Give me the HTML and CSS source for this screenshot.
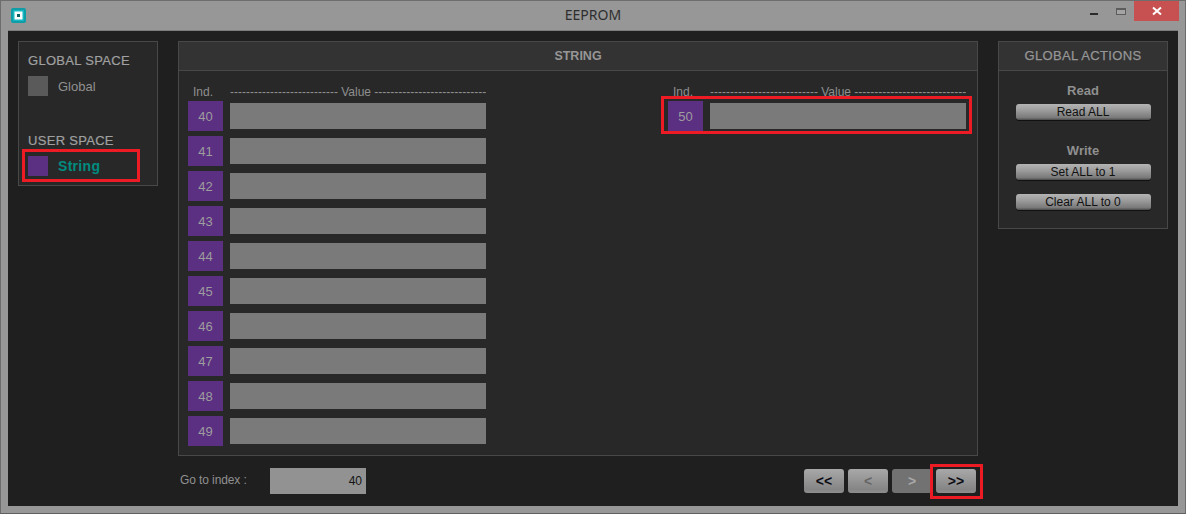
FILE: index.html
```html
<!DOCTYPE html>
<html lang="en">
<head>
<meta charset="utf-8">
<title>EEPROM</title>
<link rel="stylesheet" href="styles.css">
</head>
<body>
<div class="window">
  <header class="titlebar">
    <svg class="app-icon" width="15" height="15" viewBox="0 0 15 15" aria-hidden="true">
      <rect x="0" y="0" width="15" height="15" rx="2" fill="#0f9ea8"/>
      <rect x="2" y="2" width="11" height="11" fill="#17b6c0"/>
      <rect x="3.5" y="3.5" width="8" height="8" fill="#fff"/>
      <rect x="6" y="6" width="3" height="3" fill="#0d5f66"/>
    </svg>
    <div class="title">EEPROM</div>
    <div class="win-controls">
      <span class="win-min"></span>
      <span class="win-max"></span>
      <span class="win-close">
        <svg width="10" height="10" viewBox="0 0 10 10" aria-hidden="true"><path d="M1 1.5 L9 8.5 M9 1.5 L1 8.5" stroke="#fff" stroke-width="2" fill="none"/></svg>
      </span>
    </div>
  </header>

  <div class="client">
    <aside class="panel space-panel">
      <h2 class="space-title">GLOBAL SPACE</h2>
      <div class="space-item"><span class="swatch swatch-gray"></span><span class="space-label">Global</span></div>
      <h2 class="space-title user-title">USER SPACE</h2>
      <div class="space-item marked-left"><span class="swatch swatch-purple"></span><span class="space-label active">String</span></div>
    </aside>

    <main class="center">
      <section class="panel string-panel">
        <h2 class="panel-head">STRING</h2>
        <div class="columns">
          <div class="column">
            <div class="col-head"><span class="ind-head">Ind.</span><span class="val-head">--------------------------- Value ----------------------------</span></div>
            <div class="row"><span class="ind">40</span><span class="val"></span></div>
            <div class="row"><span class="ind">41</span><span class="val"></span></div>
            <div class="row"><span class="ind">42</span><span class="val"></span></div>
            <div class="row"><span class="ind">43</span><span class="val"></span></div>
            <div class="row"><span class="ind">44</span><span class="val"></span></div>
            <div class="row"><span class="ind">45</span><span class="val"></span></div>
            <div class="row"><span class="ind">46</span><span class="val"></span></div>
            <div class="row"><span class="ind">47</span><span class="val"></span></div>
            <div class="row"><span class="ind">48</span><span class="val"></span></div>
            <div class="row"><span class="ind">49</span><span class="val"></span></div>
          </div>
          <div class="column">
            <div class="col-head"><span class="ind-head">Ind.</span><span class="val-head">--------------------------- Value ----------------------------</span></div>
            <div class="row marked-row"><span class="ind">50</span><span class="val"></span></div>
          </div>
        </div>
      </section>
      <div class="footer">
        <label class="goto-label">Go to index :</label>
        <div class="goto-input">40</div>
        <nav class="pager">
          <button class="page-btn strong">&lt;&lt;</button>
          <button class="page-btn dim">&lt;</button>
          <button class="page-btn disabled">&gt;</button>
          <button class="page-btn strong marked-next">&gt;&gt;</button>
        </nav>
      </div>
    </main>

    <aside class="panel actions-panel">
      <h2 class="panel-head actions-head">GLOBAL ACTIONS</h2>
      <div class="actions">
        <div class="action-title">Read</div>
        <button class="action-btn">Read ALL</button>
        <div class="action-title write-title">Write</div>
        <button class="action-btn">Set ALL to 1</button>
        <button class="action-btn second">Clear ALL to 0</button>
      </div>
    </aside>
  </div>
</div>
</body>
</html>
```

FILE: styles.css
```css
*, *::after { box-sizing: border-box; }

html, body {
  margin: 0;
  height: 100%;
  overflow: hidden;
}

body {
  font-family: "Liberation Sans", Arial, sans-serif;
  font-size: 12px;
  background: #979797;
}

.window {
  width: 1186px;
  height: 514px;
  display: flex;
  flex-direction: column;
  background: #979797;
  border: 1px solid #6d6d6d;
  border-bottom-color: #5f5f5f;
}

.titlebar {
  height: 29px;
  flex: none;
  display: flex;
  position: relative;
  padding: 7px 0 0 10px;
}

.app-icon { flex: none; }

.title {
  position: absolute;
  left: 0;
  right: 0;
  top: 5px;
  text-align: center;
  font-family: "Noto Sans", sans-serif;
  font-size: 14px;
  line-height: 18px;
  color: #2e2e2e;
}

.win-controls {
  margin-left: auto;
  margin-right: 6px;
  margin-top: -7px;
  display: flex;
  align-items: flex-start;
  position: relative;
}

.win-min {
  width: 8px;
  height: 2px;
  margin: 12px 18px 0 0;
  background: #2a2a2a;
}

.win-max {
  width: 10px;
  height: 7px;
  margin: 7px 8px 0 0;
  border: 1px solid #5c5c5c;
  border-top-width: 2px;
  background: #a4a4a4;
}

.win-close {
  width: 45px;
  height: 20px;
  background: #c75050;
  display: flex;
  align-items: center;
  justify-content: center;
}

.client {
  flex: 1;
  margin: 0 7px 7px;
  padding: 10px;
  display: flex;
  align-items: flex-start;
  gap: 20px;
  background: #1f1f1f;
  border-top: 1px solid #7c7c7c;
}

.panel {
  background: #282828;
  border: 1px solid #484848;
}

/* Left panel */
.space-panel {
  width: 140px;
  height: 145px;
  flex: none;
  padding: 11px 9px 0;
}

.space-title {
  margin: 0;
  font-size: 13px;
  font-weight: normal;
  line-height: 16px;
  letter-spacing: 0.3px;
  color: #a0a0a0;
  -webkit-text-stroke: 0.2px #a0a0a0;
}

.user-title { margin-top: 37px; }

.space-item {
  display: flex;
  align-items: center;
  gap: 10px;
  margin-top: 7px;
  height: 20px;
  position: relative;
}

.swatch {
  width: 20px;
  height: 20px;
  flex: none;
}

.swatch-gray { background: #5a5a5a; }
.swatch-purple { background: #5b2f82; }

.space-label {
  font-size: 13px;
  color: #909090;
}

.space-label.active {
  font-size: 14px;
  color: #008c80;
  font-weight: bold;
  letter-spacing: 0.3px;
}

.marked-left::after,
.marked-row::after,
.marked-next::after {
  content: "";
  position: absolute;
  border: 3px solid #ed1c24;
  pointer-events: none;
}

.marked-left::after {
  left: -6px;
  top: -7px;
  width: 118px;
  height: 33px;
}

/* Centre */
.center {
  width: 800px;
  flex: none;
}

.string-panel { height: 415px; }

.panel-head {
  margin: 0;
  height: 29px;
  line-height: 28px;
  text-align: center;
  font-size: 12.5px;
  font-weight: bold;
  color: #969696;
  background: #333333;
  border-bottom: 1px solid #484848;
}

.columns {
  display: grid;
  grid-template-columns: 300px 300px;
  justify-content: space-between;
  padding: 12px 9px 0;
}

.col-head {
  height: 18px;
  display: flex;
  align-items: center;
  font-size: 12px;
  color: #8f8f8f;
}

.ind-head {
  width: 35px;
  flex: none;
  padding-right: 5px;
  text-align: center;
}

.val-head {
  margin-left: 7px;
  white-space: nowrap;
}

.row {
  height: 30px;
  margin-bottom: 5px;
  display: flex;
  align-items: center;
  gap: 7px;
  position: relative;
}

.ind {
  width: 35px;
  height: 30px;
  flex: none;
  display: flex;
  align-items: center;
  justify-content: center;
  background: #5b2f82;
  color: #9d9d9d;
  font-size: 13px;
}

.val {
  width: 256px;
  height: 26px;
  background: #7a7a7a;
}

.marked-row::after {
  left: -7px;
  top: -5px;
  width: 311px;
  height: 38px;
}

/* Footer */
.footer {
  display: flex;
  align-items: flex-start;
  height: 38px;
  padding-top: 12px;
}

.goto-label {
  width: 90px;
  margin-left: 2px;
  line-height: 25px;
  letter-spacing: -0.1px;
  color: #909090;
}

.goto-input {
  width: 96px;
  height: 26px;
  line-height: 27px;
  padding-right: 4px;
  text-align: right;
  background: #929292;
  color: #141414;
}

.pager {
  margin-left: auto;
  margin-right: 2px;
  margin-top: 1px;
  display: flex;
  gap: 4px;
}

.page-btn {
  width: 40px;
  height: 24px;
  padding: 0;
  border: none;
  border-radius: 3px;
  font-family: "Liberation Sans", Arial, sans-serif;
  font-size: 14px;
  font-weight: bold;
  background: linear-gradient(#a8a8a8 0%, #949494 50%, #858585 85%, #8e8e8e 100%);
  position: relative;
}

.page-btn.strong { color: #0c0c14; }
.page-btn.dim { color: #666; }

.page-btn.disabled {
  background: #727272;
  color: #a9a9a9;
}

.marked-next::after {
  left: -6px;
  top: -5px;
  width: 53px;
  height: 35px;
}

/* Right */
.actions-panel {
  width: 170px;
  height: 188px;
  flex: none;
}

.actions-head {
  font-size: 13px;
  letter-spacing: 0.35px;
  font-weight: normal;
  -webkit-text-stroke: 0.25px #969696;
}

.actions {
  display: flex;
  flex-direction: column;
  align-items: center;
  padding-top: 11px;
}

.action-title {
  height: 18px;
  line-height: 18px;
  font-size: 13px;
  font-weight: bold;
  color: #8f8f8f;
}

.write-title { margin-top: 22px; }

.action-btn {
  width: 135px;
  height: 16px;
  padding: 1px 0 0;
  margin-top: 4px;
  border: none;
  border-radius: 3px;
  font-family: "Liberation Sans", Arial, sans-serif;
  font-size: 12px;
  line-height: 15px;
  color: #111;
  background: linear-gradient(#b4b4b4 0%, #9c9c9c 40%, #7a7a7a 85%, #4a4a4a 100%);
  box-shadow: 0 1px 0 #111;
}

.action-btn.second { margin-top: 14px; }
```
